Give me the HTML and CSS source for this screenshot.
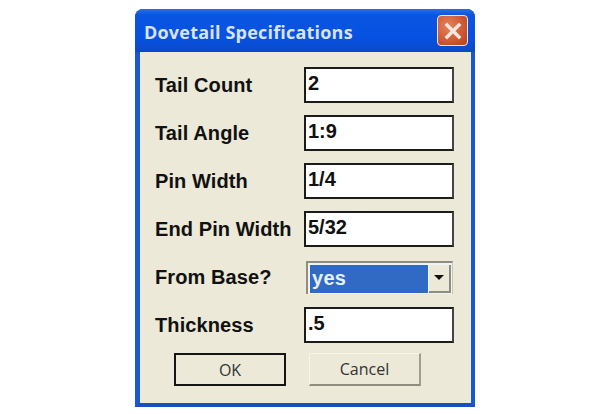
FILE: index.html
```html
<!DOCTYPE html>
<html lang="en">
<head>
    <meta charset="UTF-8">
    <title>Dovetail Specifications</title>
    <link rel="stylesheet" href="styles.css">
</head>
<body>
    <div class="window">
        <div class="titlebar">
            <span class="title">Dovetail Specifications</span>
            <div class="close-btn">
                <svg width="22" height="22" viewBox="0 0 22 22"><path d="M5 5 L17 17 M17 5 L5 17" stroke="#f6e6dc" stroke-width="3.4" stroke-linecap="square" fill="none"/></svg>
            </div>
        </div>
        <div class="content">
            <div class="row">
                <span class="label">Tail Count</span>
                <div class="field">2</div>
            </div>
            <div class="row">
                <span class="label">Tail Angle</span>
                <div class="field">1:9</div>
            </div>
            <div class="row">
                <span class="label">Pin Width</span>
                <div class="field">1/4</div>
            </div>
            <div class="row">
                <span class="label">End Pin Width</span>
                <div class="field">5/32</div>
            </div>
            <div class="row">
                <span class="label">From Base?</span>
                <div class="combo">
                    <div class="combo-value">yes</div>
                    <div class="combo-arrow"><span class="arrow"></span></div>
                </div>
            </div>
            <div class="row">
                <span class="label">Thickness</span>
                <div class="field">.5</div>
            </div>
            <div class="buttons">
                <div class="btn btn-default">OK</div>
                <div class="btn">Cancel</div>
            </div>
        </div>
    </div>
</body>
</html>
```
FILE: styles.css
```css
body {
    margin: 0;
    width: 600px;
    height: 414px;
    overflow: hidden;
    background-color: #ffffff;
    font-family: "Liberation Sans", Arial, sans-serif;
}
.window {
    box-sizing: border-box;
    width: 340px;
    height: 398px;
    margin: 9px 0 0 135px;
    display: flex;
    flex-direction: column;
    background-color: #0a4fd6;
    border-radius: 8px 8px 0 0;
    border-bottom: 4px solid #1a4fc0;
    border-left: 5px solid #1a58d0;
    border-right: 4px solid #1a58d0;
}
.titlebar {
    height: 43px;
    flex-shrink: 0;
    display: flex;
    align-items: center;
    justify-content: space-between;
    margin: 0 -4px 0 -5px;
    padding: 0 7px 0 9px;
    border-radius: 8px 8px 0 0;
    background: linear-gradient(#2b6fe0 0%, #0a55e0 14%, #0651e2 70%, #0a49c4 100%);
}
.title {
    padding-top: 3px;
    color: #d9e3f2;
    font-family: "Open Sans", "Liberation Sans", sans-serif;
    font-size: 18px;
    font-weight: bold;
    letter-spacing: 0.2px;
}
.close-btn {
    box-sizing: border-box;
    width: 31px;
    height: 31px;
    display: flex;
    align-items: center;
    justify-content: center;
    border: 1.5px solid #f0e6e0;
    border-radius: 4px;
    background: radial-gradient(circle at 35% 35%, #e8825e, #c8502c 70%, #b24424);
}
.content {
    flex: 1;
    padding: 15px 17px 0 15px;
    background-color: #ece9d8;
}
.row {
    height: 36px;
    margin-bottom: 12px;
    display: flex;
    align-items: center;
    justify-content: space-between;
}
.label {
    color: #111111;
    font-size: 20px;
    font-weight: bold;
    letter-spacing: 0.1px;
    white-space: nowrap;
}
.field {
    box-sizing: border-box;
    width: 150px;
    height: 36px;
    padding: 3px 0 0 2px;
    background-color: #ffffff;
    border: 2px solid #1c1c1c;
    border-right-color: #444444;
    color: #111111;
    font-size: 20px;
    font-weight: bold;
}
.combo {
    box-sizing: border-box;
    width: 147px;
    height: 33px;
    margin-right: 1px;
    display: flex;
    padding: 2px 1px 1px 2px;
    background-color: #eef4fa;
    border-left: 2px solid #8f8d80;
    border-top: 2px solid #8f8d80;
    border-right: 1px solid #c9c6b4;
}
.combo-value {
    width: 116px;
    padding-left: 2px;
    background-color: #316ac5;
    color: #e8f0fa;
    font-size: 20px;
    font-weight: bold;
    letter-spacing: 0.3px;
    line-height: 27px;
}
.combo-arrow {
    flex: 1;
    margin-left: 1px;
    display: flex;
    align-items: center;
    justify-content: center;
    background-color: #ece9d8;
    border-right: 2px solid #8f8d80;
    border-bottom: 2px solid #8f8d80;
}
.arrow {
    width: 0;
    height: 0;
    border-left: 5px solid transparent;
    border-right: 5px solid transparent;
    border-top: 5px solid #111111;
}
.buttons {
    display: flex;
    gap: 23px;
    margin: -2px 0 0 19px;
}
.btn {
    box-sizing: border-box;
    width: 112px;
    height: 33px;
    display: flex;
    align-items: center;
    justify-content: center;
    background-color: #ece9d8;
    border: 1px solid #f7f5ea;
    border-right: 2px solid #a09e90;
    border-bottom: 2px solid #8f8d80;
    color: #333333;
    font-family: "Open Sans", "Liberation Sans", sans-serif;
    font-size: 16px;
}
.btn-default {
    border: 2px solid #151515;
}
```
